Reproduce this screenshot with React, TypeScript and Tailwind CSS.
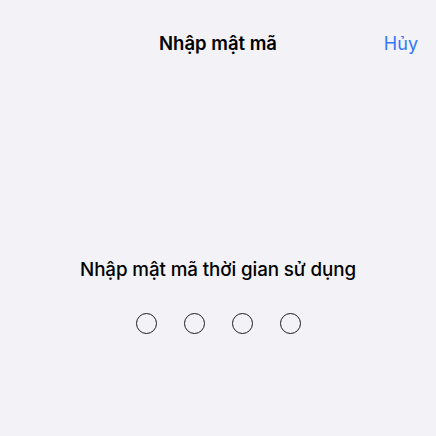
import React from 'react';

const App = () => {
  return (
    <div className="w-[436px] h-[436px] bg-[#f2f2f7] flex flex-col" style={{ fontFamily: 'Inter, "Noto Sans", sans-serif' }}>
      {/* Header */}
      <div className="relative h-[88px] flex items-center justify-center">
        <span className="text-[18.5px] font-semibold text-black">Nhập mật mã</span>
        <span className="absolute right-[18px] top-[30px] text-[18px] text-[#3478f6]">Hủy</span>
      </div>

      <div className="flex flex-col items-center pt-[170px]">
        <span className="text-[18.8px] font-medium text-black tracking-[-0.1px] leading-[24px]">Nhập mật mã thời gian sử dụng</span>
        <div className="flex gap-[27px] mt-[31px]">
          {[0, 1, 2, 3].map((i) => (
            <div key={i} className="w-[21px] h-[21px] rounded-full border-[1.5px] border-[#1c1c1e]" />
          ))}
        </div>
      </div>
    </div>
  );
};

export default App;
